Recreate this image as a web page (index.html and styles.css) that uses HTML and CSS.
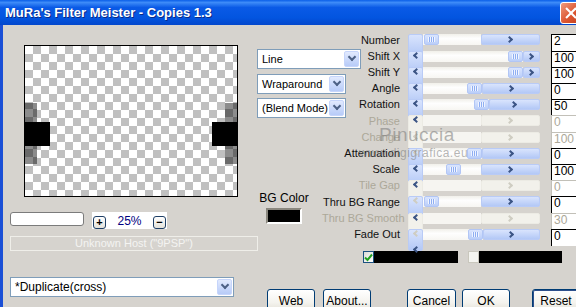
FILE: index.html
```html
<!DOCTYPE html>
<html lang="en">
<head>
    <meta charset="UTF-8">
    <title>MuRa's Filter Meister - Copies 1.3</title>
    <link rel="stylesheet" href="styles.css">
</head>
<body>

<div class="window">
    <div class="titlebar">
        <span class="title">MuRa's Filter Meister - Copies 1.3</span>
        <span class="close"></span>
    </div>

    <div class="body">
        <!-- preview and host info -->
        <div class="left">
            <div class="preview">
                <div class="copy copy-left">
                    <div class="shade shade-a"></div>
                    <div class="block"></div>
                    <div class="shade shade-b"></div>
                </div>
                <div class="copy copy-right">
                    <div class="shade shade-c"></div>
                    <div class="block"></div>
                    <div class="shade shade-d"></div>
                </div>
            </div>

            <div class="zoom-row">
                <div class="textbox"></div>
                <div class="zoom-ctrl">
                    <span class="mini">+</span>
                    <span class="pct">25%</span>
                    <span class="mini">&minus;</span>
                </div>
            </div>

            <div class="status">Unknown Host ("9PSP")</div>

            <div class="combo combo-preset"><span>*Duplicate(cross)</span><span class="drop"></span></div>
        </div>

        <div class="right">
            <div class="upper">
                <div class="mid">
                    <div class="combo combo-line"><span>Line</span><span class="drop"></span></div>
                    <div class="combo combo-short"><span>Wraparound</span><span class="drop"></span></div>
                    <div class="combo combo-short"><span>(Blend Mode)</span><span class="drop"></span></div>

                    <div class="bg-color">
                        <div class="bg-label">BG Color</div>
                        <div class="swatch"></div>
                    </div>
                </div>

                <!-- parameter sliders -->
                <div class="params">
                    <div class="label">Number</div>
                    <div class="slider"><span class="arrow left"></span><span class="track"><span class="thumb" style="margin-left:1px"></span></span><span class="arrow right"></span></div>
                    <div class="value">2</div>

                    <div class="label">Shift X</div>
                    <div class="slider"><span class="arrow left"></span><span class="track"><span class="thumb" style="margin-left:85px"></span></span><span class="arrow right"></span></div>
                    <div class="value">100</div>

                    <div class="label">Shift Y</div>
                    <div class="slider"><span class="arrow left"></span><span class="track"><span class="thumb" style="margin-left:85px"></span></span><span class="arrow right"></span></div>
                    <div class="value">100</div>

                    <div class="label">Angle</div>
                    <div class="slider"><span class="arrow left"></span><span class="track"><span class="thumb" style="margin-left:44px"></span></span><span class="arrow right"></span></div>
                    <div class="value">0</div>

                    <div class="label">Rotation</div>
                    <div class="slider"><span class="arrow left"></span><span class="track"><span class="thumb" style="margin-left:51px"></span></span><span class="arrow right"></span></div>
                    <div class="value">50</div>

                    <div class="label off">Phase</div>
                    <div class="slider off"><span class="arrow left"></span><span class="track"></span><span class="arrow right"></span></div>
                    <div class="value off">0</div>

                    <div class="label off">Change</div>
                    <div class="slider off"><span class="arrow left"></span><span class="track"></span><span class="arrow right"></span></div>
                    <div class="value off">100</div>

                    <div class="label">Attenuation</div>
                    <div class="slider"><span class="arrow left"></span><span class="track"><span class="thumb" style="margin-left:44px"></span></span><span class="arrow right"></span></div>
                    <div class="value">0</div>

                    <div class="label">Scale</div>
                    <div class="slider"><span class="arrow left"></span><span class="track"><span class="thumb" style="margin-left:23px"></span></span><span class="arrow right"></span></div>
                    <div class="value">100</div>

                    <div class="label off">Tile Gap</div>
                    <div class="slider off"><span class="arrow left"></span><span class="track"></span><span class="arrow right"></span></div>
                    <div class="value off">0</div>

                    <div class="label">Thru BG Range</div>
                    <div class="slider"><span class="arrow left"></span><span class="track"><span class="thumb" style="margin-left:1px"></span></span><span class="arrow right"></span></div>
                    <div class="value">0</div>

                    <div class="label off">Thru BG Smooth</div>
                    <div class="slider off"><span class="arrow left"></span><span class="track"></span><span class="arrow right"></span></div>
                    <div class="value off">30</div>

                    <div class="label">Fade Out</div>
                    <div class="slider"><span class="arrow left"></span><span class="track"><span class="thumb" style="margin-left:45px"></span></span><span class="arrow right"></span></div>
                    <div class="value">0</div>

                    <!-- watermark over the dialog -->
                    <div class="mark mark-name">Pinuccia</div>
                    <div class="mark mark-site">www.digigrafica.eu</div>
                </div>
            </div>

            <div class="checks">
                <span class="checkbox checked">
                    <svg width="9" height="9" viewBox="0 0 9 9"><path d="M1 4.5 L3.5 7 L8 1.5" fill="none" stroke="#21a121" stroke-width="2"/></svg>
                </span>
                <span class="color-bar"></span>
                <span class="checkbox"></span>
                <span class="color-bar"></span>
            </div>

            <div class="buttons">
                <button class="btn">Web</button>
                <button class="btn">About...</button>
                <button class="btn btn-cancel">Cancel</button>
                <button class="btn btn-ok">OK</button>
                <button class="btn btn-reset">Reset</button>
            </div>
        </div>
    </div>
</div>

</body>
</html>
```

FILE: styles.css
```css
body {
    margin: 0;
    font-family: "Liberation Sans", Arial, sans-serif;
    font-size: 11px;
    color: #000;
    background-color: #d6d3ce;
}
.window {
    width: 576px;
    height: 307px;
    overflow: hidden;
    background-color: #d6d3ce;
}

/* title bar */
.titlebar {
    height: 25px;
    display: flex;
    align-items: center;
    background: linear-gradient(#0a5fe8 0%, #3d8bf8 10%, #0a5ae6 30%, #0355e0 70%, #0347cc 100%);
}
.title {
    padding-left: 5px;
    color: #fff;
    font-weight: bold;
    font-size: 13px;
    text-shadow: 1px 1px 0 #0a2a86;
}
.close {
    margin-left: auto;
    margin-right: -7px;
    width: 21px;
    height: 20px;
    border: 1px solid #fff;
    border-radius: 3px;
    background: linear-gradient(135deg, #ee9a7c, #dc5530 55%, #c0401c);
    position: relative;
}
.close::before, .close::after {
    content: "";
    position: absolute;
    left: 9px;
    top: 3px;
    width: 2px;
    height: 14px;
    background-color: #fff;
    transform: rotate(45deg);
}
.close::after {
    transform: rotate(-45deg);
}

.body {
    display: flex;
    border-left: 3px solid #1a4fd6;
    padding-left: 7px;
    height: 282px;
}

/* left column */
.left {
    width: 247px;
    flex-shrink: 0;
    padding-top: 20px;
}
.preview {
    margin-left: 14px;
    width: 214px;
    height: 152px;
    box-sizing: border-box;
    border: 1px solid #000;
    background: repeating-conic-gradient(#c0c0c0 0 25%, #fff 0 50%) 0 0 / 16px 16px;
    display: flex;
    justify-content: space-between;
    padding-top: 57px;
}
.copy {
    display: flex;
    flex-direction: column;
}
.copy-right {
    align-items: flex-end;
}
.block {
    width: 25px;
    height: 24px;
    background-color: #000;
}
.shade {
    width: 12px;
    background: repeating-conic-gradient(#6a6a6a 0 25%, #8c8c8c 0 50%) 0 0 / 16px 16px;
}
.shade-a, .shade-c {
    height: 19px;
    background-position: 0 -10px;
}
.shade-b, .shade-d {
    height: 18px;
    background-position: 0 -5px;
}
.shade-c, .shade-d {
    background-position-x: -8px;
}

.zoom-row {
    display: flex;
    align-items: flex-start;
    margin-top: 15px;
}
.textbox {
    width: 74px;
    height: 14px;
    box-sizing: border-box;
    border: 1px solid #7b7b7b;
    border-radius: 3px;
    background-color: #fff;
}
.zoom-ctrl {
    margin-left: 8px;
    width: 75px;
    height: 17px;
    background-color: #fff;
    display: flex;
    align-items: flex-end;
    padding: 0 1px;
    box-sizing: border-box;
}
.mini {
    width: 13px;
    height: 13px;
    box-sizing: border-box;
    border: 1px solid #1f3f66;
    border-radius: 3px;
    background: linear-gradient(#fff, #e4e2da);
    font-size: 11px;
    font-weight: bold;
    line-height: 10px;
    text-align: center;
}
.pct {
    flex: 1;
    text-align: center;
    color: #000080;
    font-size: 12px;
    line-height: 15px;
}

.status {
    margin-top: 7px;
    width: 248px;
    height: 15px;
    box-sizing: border-box;
    border: 1px solid #efeee9;
    color: #f4f4f2;
    text-align: center;
    line-height: 13px;
}

/* combo boxes */
.combo {
    height: 20px;
    box-sizing: border-box;
    border: 1px solid #7f9db9;
    background-color: #fff;
    display: flex;
    align-items: center;
    padding-left: 4px;
    padding-right: 1px;
    white-space: nowrap;
}
.combo .drop {
    margin-left: auto;
    width: 15px;
    height: 16px;
    box-sizing: border-box;
    border: 1px solid #c6d5fb;
    border-radius: 2px;
    background: linear-gradient(#e2eafe, #b7cbf8);
    display: flex;
    justify-content: center;
    align-items: center;
}
.combo .drop::before {
    content: "";
    width: 4px;
    height: 4px;
    border-left: 2px solid #4d6185;
    border-bottom: 2px solid #4d6185;
    transform: translateY(-2px) rotate(-45deg);
}
.combo-preset {
    margin-top: 26px;
    width: 224px;
    font-size: 12px;
}

/* right area */
.right {
    flex: 1;
    display: flex;
    flex-direction: column;
}
.upper {
    display: flex;
}
.mid {
    width: 65px;
    flex-shrink: 0;
    padding-top: 24px;
}
.combo-line {
    width: 104px;
}
.combo-short {
    width: 89px;
    margin-top: 5px;
}
.combo-short + .combo-short {
    margin-top: 4px;
}
.bg-color {
    width: 54px;
    margin-top: 74px;
    display: flex;
    flex-direction: column;
    align-items: center;
}
.bg-label {
    font-size: 12px;
    line-height: 13px;
}
.swatch {
    margin-top: 3px;
    width: 36px;
    height: 16px;
    box-sizing: border-box;
    background-color: #000;
    border: 2px solid #8a877e;
    border-right-color: #fff;
    border-bottom-color: #fff;
}

.params {
    position: relative;
    display: grid;
    grid-template-columns: 78px 132px 30px;
    grid-template-rows: 17px 16px 16px 16px 16px 17px 16px 16px 16px 16px 17px 16px 16px;
    column-gap: 8px;
    padding-top: 6px;
    align-items: center;
}
.label {
    text-align: right;
    white-space: nowrap;
    font-size: 11px;
    line-height: 14px;
    color: #111;
}
.label.off {
    color: #aca899;
}
.slider {
    display: flex;
    height: 11px;
}
.arrow {
    width: 15px;
    flex-shrink: 0;
    box-sizing: border-box;
    border: 1px solid #b9cbf6;
    border-radius: 2px;
    background: linear-gradient(#d9e4fd, #b3c8f6);
    display: flex;
    justify-content: center;
    align-items: center;
}
.arrow::before {
    content: "";
    width: 3px;
    height: 3px;
    border-left: 2px solid #3c5585;
    border-bottom: 2px solid #3c5585;
    transform: translateX(1px) rotate(45deg);
}
.arrow.right::before {
    transform: translateX(-1px) rotate(-135deg);
}
.track {
    flex: 1;
    display: flex;
    background: linear-gradient(#f1f0ea, #fefefe 40%, #f7f6f2);
}
.thumb {
    width: 15px;
    flex-shrink: 0;
    box-sizing: border-box;
    border: 1px solid #b2c6f5;
    border-radius: 2px;
    background: linear-gradient(#dae5fe, #bacef9);
    display: flex;
    justify-content: center;
    align-items: center;
}
.thumb::after {
    content: "";
    width: 7px;
    height: 5px;
    background: repeating-linear-gradient(90deg, #f0f4ff 0 1px, #8eaef2 1px 2px);
}
.slider.off .arrow {
    border-color: #ecebe4;
    background: #f2f1eb;
}
.slider.off .arrow::before {
    border-color: #cfcdc2;
}
.slider.off .track {
    background: #f6f5f1;
}
.value {
    align-self: start;
    margin-top: 3px;
    margin-left: 3px;
    height: 17px;
    box-sizing: border-box;
    border-top: 1px solid #000;
    border-left: 1px solid #000;
    background-color: #fff;
    padding-left: 2px;
    font-size: 12px;
    line-height: 12px;
}
.value.off {
    border-color: #c2c0b8;
    color: #aca899;
}

.mark {
    position: absolute;
    color: rgba(120, 120, 120, 0.55);
    white-space: nowrap;
}
.mark-name {
    left: 57px;
    top: 100px;
    font-size: 19px;
    line-height: 19px;
    letter-spacing: 0.5px;
}
.mark-site {
    left: 37px;
    top: 122px;
    font-size: 12px;
    line-height: 12px;
    letter-spacing: 0.5px;
}

/* colour checkboxes */
.checks {
    display: flex;
    margin-top: 9px;
    padding-left: 106px;
    height: 12px;
}
.checkbox {
    width: 11px;
    height: 12px;
    box-sizing: border-box;
    border: 1px solid #1c5180;
    background: linear-gradient(135deg, #dcdcd7, #fff);
    display: flex;
    justify-content: center;
    align-items: center;
}
.checkbox + .color-bar + .checkbox {
    margin-left: 10px;
    border-color: #c9c7bd;
    background: #f4f4f0;
}
.color-bar {
    width: 84px;
    background-color: #000;
}
.color-bar:last-child {
    width: 83px;
}

/* dialog buttons */
.buttons {
    display: flex;
    margin-top: 26px;
    padding-left: 10px;
    gap: 8px;
}
.btn {
    width: 48px;
    height: 23px;
    flex-shrink: 0;
    box-sizing: border-box;
    border: 1px solid #003c74;
    border-radius: 3px;
    background: linear-gradient(#ffffff, #f4f3ee 60%, #e3e0d6);
    font-family: "Liberation Sans", Arial, sans-serif;
    font-size: 12px;
    color: #000;
    padding: 0;
}
.btn-cancel {
    width: 49px;
    margin-left: 28px;
}
.btn-ok {
    margin-left: -2px;
}
.btn-reset {
    margin-left: 14px;
    box-shadow: inset 0 0 0 1px #2d4f8c;
}
```
